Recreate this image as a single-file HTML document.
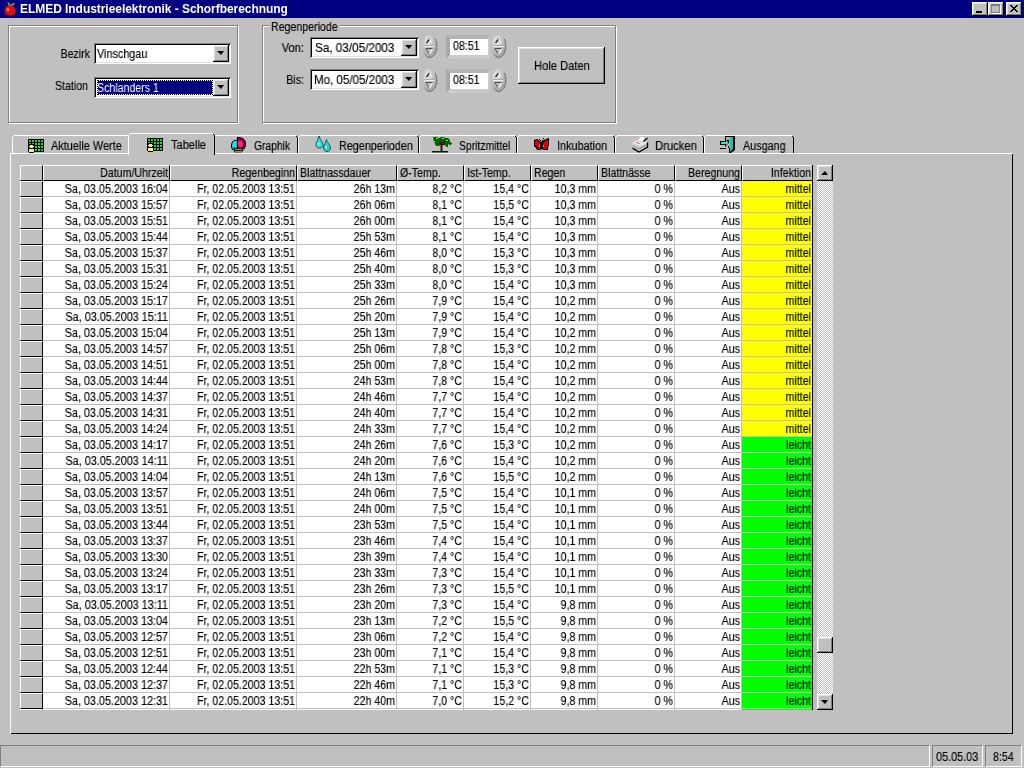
<!DOCTYPE html>
<html><head><meta charset="utf-8">
<style>
*{margin:0;padding:0;box-sizing:border-box}
html,body{width:1024px;height:768px;overflow:hidden;background:#c0c0c0}
body{position:relative;font-family:"Liberation Sans",sans-serif;font-size:12px;color:#000}
.a{position:absolute}
.t{position:absolute;will-change:transform;-webkit-text-stroke:0.15px currentColor;white-space:nowrap;line-height:13px;font-size:12px;transform:scaleX(.885);transform-origin:0 0}
.r{text-align:right;transform-origin:100% 0}
.raised{background:#c0c0c0;box-shadow:inset -1px -1px #000,inset 1px 1px #fff,inset -2px -2px #808080,inset 2px 2px #dfdfdf}
.sunk{box-shadow:inset 1px 1px #808080,inset -1px -1px #fff,inset 2px 2px #000,inset -2px -2px #dfdfdf}
.etch{border:1px solid #808080;box-shadow:1px 1px #fff, inset 1px 1px #fff}
.arrd{position:absolute;width:0;height:0;border-left:4px solid transparent;border-right:3px solid transparent;border-top:4px solid #000}
.fx{position:absolute;background:#c0c0c0;border-left:1px solid #fff;border-top:1px solid #fff;border-right:1px solid #000;border-bottom:1px solid #000}
.c{position:absolute;border-right:1px solid #c0c0c0;border-bottom:1px solid #c0c0c0}
</style></head><body>

<div class="a" style="left:0;top:0;width:1024px;height:18px;background:#000080"></div>
<svg class="a" style="left:3px;top:1px" width="16" height="16" viewBox="0 0 16 16">
<ellipse cx="7.2" cy="9.6" rx="5.6" ry="5.4" fill="#d81010"/>
<path d="M2.5 12 Q4 15.5 8 15 Q11 15 12.5 12" stroke="#700000" stroke-width="1" fill="none"/>
<ellipse cx="5" cy="8.5" rx="1.2" ry="1.8" fill="#ff7070"/>
<path d="M6.5 4.5 L5 1.5" stroke="#40c0a0" stroke-width="1.6"/>
<path d="M7.5 4.5 L11.5 2.5" stroke="#90a040" stroke-width="1.6"/>
</svg>
<div class="a" style="left:20px;top:3px;color:#fff;font-weight:bold;font-size:12px;line-height:13px;white-space:nowrap;letter-spacing:-0.05px;will-change:transform">ELMED Industrieelektronik - Schorfberechnung</div>
<div class="a raised" style="left:972px;top:2px;width:16px;height:14px"></div>
<div class="a raised" style="left:988px;top:2px;width:16px;height:14px"></div>
<div class="a raised" style="left:1006px;top:2px;width:16px;height:14px"></div>
<div class="a" style="left:976px;top:11px;width:6px;height:2px;background:#000"></div>
<div class="a" style="left:991px;top:4px;width:9px;height:9px;border:1px solid #808080;border-top-width:2px;box-shadow:1px 1px #fff"></div>
<svg class="a" style="left:1010px;top:5px" width="8" height="7" fill="#000"><rect x="0" y="0" width="1" height="1"/><rect x="1" y="0" width="1" height="1"/><rect x="6" y="0" width="1" height="1"/><rect x="7" y="0" width="1" height="1"/><rect x="1" y="1" width="1" height="1"/><rect x="2" y="1" width="1" height="1"/><rect x="5" y="1" width="1" height="1"/><rect x="6" y="1" width="1" height="1"/><rect x="2" y="2" width="1" height="1"/><rect x="3" y="2" width="1" height="1"/><rect x="4" y="2" width="1" height="1"/><rect x="5" y="2" width="1" height="1"/><rect x="3" y="3" width="1" height="1"/><rect x="4" y="3" width="1" height="1"/><rect x="3" y="3" width="1" height="1"/><rect x="4" y="3" width="1" height="1"/><rect x="4" y="4" width="1" height="1"/><rect x="5" y="4" width="1" height="1"/><rect x="2" y="4" width="1" height="1"/><rect x="3" y="4" width="1" height="1"/><rect x="5" y="5" width="1" height="1"/><rect x="6" y="5" width="1" height="1"/><rect x="1" y="5" width="1" height="1"/><rect x="2" y="5" width="1" height="1"/><rect x="6" y="6" width="1" height="1"/><rect x="7" y="6" width="1" height="1"/><rect x="0" y="6" width="1" height="1"/><rect x="1" y="6" width="1" height="1"/></svg>
<div class="a etch" style="left:8px;top:25px;width:230px;height:98px"></div>
<div class="a etch" style="left:262px;top:25px;width:354px;height:98px"></div>
<div class="a" style="left:269px;top:20px;width:71px;height:10px;background:#c0c0c0"></div>
<div class="t" style="left:271px;top:21px;">Regenperiode</div>
<div class="t r" style="left:-110px;top:48px;width:200px;">Bezirk</div>
<div class="t r" style="left:-112px;top:80px;width:200px;">Station</div>
<div class="a sunk" style="left:94px;top:43px;width:137px;height:21px;background:#fff"></div>
<div class="t" style="left:97px;top:48px;transform:scaleX(0.9);">Vinschgau</div>
<div class="a raised" style="left:213px;top:45px;width:16px;height:17px"></div>
<div class="arrd" style="left:217px;top:51px"></div>
<div class="a sunk" style="left:94px;top:77px;width:137px;height:21px;background:#fff"></div>
<div class="a" style="left:97px;top:80px;width:116px;height:15px;background:#fff;border:1px dotted #000;box-shadow:inset 0 0 0 30px #000080"></div>
<div class="t" style="left:97px;top:82px;color:#fff;-webkit-text-stroke:0">Schlanders 1</div>
<div class="a raised" style="left:213px;top:79px;width:16px;height:17px"></div>
<div class="arrd" style="left:217px;top:85px"></div>
<div class="t r" style="left:104px;top:42px;width:200px;transform:scaleX(0.93);">Von:</div>
<div class="t r" style="left:104px;top:74px;width:200px;">Bis:</div>
<div class="a sunk" style="left:310px;top:37px;width:109px;height:21px;background:#fff"></div>
<div class="t" style="left:315px;top:42px;transform:scaleX(0.975);">Sa, 03/05/2003</div>
<div class="a raised" style="left:401px;top:39px;width:16px;height:17px"></div>
<div class="arrd" style="left:405px;top:45px"></div>
<div class="a sunk" style="left:310px;top:69px;width:109px;height:21px;background:#fff"></div>
<div class="t" style="left:314px;top:74px;transform:scaleX(0.963);">Mo, 05/05/2003</div>
<div class="a raised" style="left:401px;top:71px;width:16px;height:17px"></div>
<div class="arrd" style="left:405px;top:77px"></div>
<svg class="a" style="left:421px;top:34px" width="17" height="24" viewBox="0 0 17 24">
<defs><radialGradient id="sg421_34" cx="0.38" cy="0.3" r="0.75"><stop offset="0" stop-color="#ececec"/><stop offset="0.5" stop-color="#c4c4c4"/><stop offset="1" stop-color="#9c9c9c"/></radialGradient></defs>
<ellipse cx="8.5" cy="12" rx="7.2" ry="11.2" fill="url(#sg421_34)"/>
<path d="M14.2 5 A7.2 11.2 0 0 1 4 20.7" stroke="#404040" stroke-width="1" fill="none" stroke-dasharray="1.2 0.6"/>
<path d="M3.5 12.5 H13.5" stroke="#f0f0f0" stroke-width="1"/>
<path d="M3.5 11.5 H13.5" stroke="#a8a8a8" stroke-width="1"/>
<path d="M5.5 9 L8.5 5" stroke="#202020" stroke-width="1.3" fill="none"/>
<path d="M8.5 5 L11 9" stroke="#f8f8f8" stroke-width="1" fill="none"/>
<path d="M4.5 14.5 H11.5" stroke="#505050" stroke-width="1.2" fill="none"/>
<path d="M5 15 L8.5 20" stroke="#505050" stroke-width="1" fill="none"/>
<path d="M11.5 15 L8.5 20" stroke="#ffffff" stroke-width="1.2" fill="none"/>
</svg>
<svg class="a" style="left:421px;top:68px" width="17" height="24" viewBox="0 0 17 24">
<defs><radialGradient id="sg421_68" cx="0.38" cy="0.3" r="0.75"><stop offset="0" stop-color="#ececec"/><stop offset="0.5" stop-color="#c4c4c4"/><stop offset="1" stop-color="#9c9c9c"/></radialGradient></defs>
<ellipse cx="8.5" cy="12" rx="7.2" ry="11.2" fill="url(#sg421_68)"/>
<path d="M14.2 5 A7.2 11.2 0 0 1 4 20.7" stroke="#404040" stroke-width="1" fill="none" stroke-dasharray="1.2 0.6"/>
<path d="M3.5 12.5 H13.5" stroke="#f0f0f0" stroke-width="1"/>
<path d="M3.5 11.5 H13.5" stroke="#a8a8a8" stroke-width="1"/>
<path d="M5.5 9 L8.5 5" stroke="#202020" stroke-width="1.3" fill="none"/>
<path d="M8.5 5 L11 9" stroke="#f8f8f8" stroke-width="1" fill="none"/>
<path d="M4.5 14.5 H11.5" stroke="#505050" stroke-width="1.2" fill="none"/>
<path d="M5 15 L8.5 20" stroke="#505050" stroke-width="1" fill="none"/>
<path d="M11.5 15 L8.5 20" stroke="#ffffff" stroke-width="1.2" fill="none"/>
</svg>
<svg class="a" style="left:490px;top:34px" width="17" height="24" viewBox="0 0 17 24">
<defs><radialGradient id="sg490_34" cx="0.38" cy="0.3" r="0.75"><stop offset="0" stop-color="#ececec"/><stop offset="0.5" stop-color="#c4c4c4"/><stop offset="1" stop-color="#9c9c9c"/></radialGradient></defs>
<ellipse cx="8.5" cy="12" rx="7.2" ry="11.2" fill="url(#sg490_34)"/>
<path d="M14.2 5 A7.2 11.2 0 0 1 4 20.7" stroke="#404040" stroke-width="1" fill="none" stroke-dasharray="1.2 0.6"/>
<path d="M3.5 12.5 H13.5" stroke="#f0f0f0" stroke-width="1"/>
<path d="M3.5 11.5 H13.5" stroke="#a8a8a8" stroke-width="1"/>
<path d="M5.5 9 L8.5 5" stroke="#202020" stroke-width="1.3" fill="none"/>
<path d="M8.5 5 L11 9" stroke="#f8f8f8" stroke-width="1" fill="none"/>
<path d="M4.5 14.5 H11.5" stroke="#505050" stroke-width="1.2" fill="none"/>
<path d="M5 15 L8.5 20" stroke="#505050" stroke-width="1" fill="none"/>
<path d="M11.5 15 L8.5 20" stroke="#ffffff" stroke-width="1.2" fill="none"/>
</svg>
<svg class="a" style="left:490px;top:68px" width="17" height="24" viewBox="0 0 17 24">
<defs><radialGradient id="sg490_68" cx="0.38" cy="0.3" r="0.75"><stop offset="0" stop-color="#ececec"/><stop offset="0.5" stop-color="#c4c4c4"/><stop offset="1" stop-color="#9c9c9c"/></radialGradient></defs>
<ellipse cx="8.5" cy="12" rx="7.2" ry="11.2" fill="url(#sg490_68)"/>
<path d="M14.2 5 A7.2 11.2 0 0 1 4 20.7" stroke="#404040" stroke-width="1" fill="none" stroke-dasharray="1.2 0.6"/>
<path d="M3.5 12.5 H13.5" stroke="#f0f0f0" stroke-width="1"/>
<path d="M3.5 11.5 H13.5" stroke="#a8a8a8" stroke-width="1"/>
<path d="M5.5 9 L8.5 5" stroke="#202020" stroke-width="1.3" fill="none"/>
<path d="M8.5 5 L11 9" stroke="#f8f8f8" stroke-width="1" fill="none"/>
<path d="M4.5 14.5 H11.5" stroke="#505050" stroke-width="1.2" fill="none"/>
<path d="M5 15 L8.5 20" stroke="#505050" stroke-width="1" fill="none"/>
<path d="M11.5 15 L8.5 20" stroke="#ffffff" stroke-width="1.2" fill="none"/>
</svg>
<div class="a" style="left:446px;top:35px;width:44px;height:24px;background:#fff;border-style:solid;border-width:4px 2px 4px 4px;border-color:#b4b4b4 #cccccc #cacaca #a8a8a8"></div>
<div class="t" style="left:453px;top:40px;">08:51</div>
<div class="a" style="left:446px;top:69px;width:44px;height:24px;background:#fff;border-style:solid;border-width:4px 2px 4px 4px;border-color:#b4b4b4 #cccccc #cacaca #a8a8a8"></div>
<div class="t" style="left:453px;top:74px;">08:51</div>
<div class="a raised" style="left:518px;top:47px;width:87px;height:37px"></div>
<div class="t" style="left:534px;top:60px;transform:scaleX(0.93);">Hole Daten</div>
<div class="a" style="left:10px;top:153px;width:1003px;height:581px;border-left:1px solid #fff;border-top:1px solid #fff;box-shadow:inset -1px -1px #000"></div>
<div class="a" style="left:12px;top:135px;width:118px;height:18px;background:#c0c0c0"></div>
<div class="a" style="left:12px;top:137px;width:1px;height:16px;background:#fff"></div>
<div class="a" style="left:13px;top:136px;width:1px;height:1px;background:#fff"></div>
<div class="a" style="left:14px;top:135px;width:114px;height:1px;background:#fff"></div>
<div class="a" style="left:129px;top:137px;width:1px;height:16px;background:#000"></div>
<div class="a" style="left:128px;top:136px;width:1px;height:1px;background:#000"></div>
<div class="t" style="left:51px;top:140px;transform:scaleX(0.91);">Aktuelle Werte</div>
<div class="a" style="left:213px;top:135px;width:85px;height:18px;background:#c0c0c0"></div>
<div class="a" style="left:213px;top:137px;width:1px;height:16px;background:#fff"></div>
<div class="a" style="left:214px;top:136px;width:1px;height:1px;background:#fff"></div>
<div class="a" style="left:215px;top:135px;width:81px;height:1px;background:#fff"></div>
<div class="a" style="left:297px;top:137px;width:1px;height:16px;background:#000"></div>
<div class="a" style="left:296px;top:136px;width:1px;height:1px;background:#000"></div>
<div class="t" style="left:254px;top:140px;transform:scaleX(0.86);">Graphik</div>
<div class="a" style="left:298px;top:135px;width:121px;height:18px;background:#c0c0c0"></div>
<div class="a" style="left:298px;top:137px;width:1px;height:16px;background:#fff"></div>
<div class="a" style="left:299px;top:136px;width:1px;height:1px;background:#fff"></div>
<div class="a" style="left:300px;top:135px;width:117px;height:1px;background:#fff"></div>
<div class="a" style="left:418px;top:137px;width:1px;height:16px;background:#000"></div>
<div class="a" style="left:417px;top:136px;width:1px;height:1px;background:#000"></div>
<div class="t" style="left:339px;top:140px;transform:scaleX(0.9);">Regenperioden</div>
<div class="a" style="left:419px;top:135px;width:98px;height:18px;background:#c0c0c0"></div>
<div class="a" style="left:419px;top:137px;width:1px;height:16px;background:#fff"></div>
<div class="a" style="left:420px;top:136px;width:1px;height:1px;background:#fff"></div>
<div class="a" style="left:421px;top:135px;width:94px;height:1px;background:#fff"></div>
<div class="a" style="left:516px;top:137px;width:1px;height:16px;background:#000"></div>
<div class="a" style="left:515px;top:136px;width:1px;height:1px;background:#000"></div>
<div class="t" style="left:459px;top:140px;transform:scaleX(0.865);">Spritzmittel</div>
<div class="a" style="left:517px;top:135px;width:98px;height:18px;background:#c0c0c0"></div>
<div class="a" style="left:517px;top:137px;width:1px;height:16px;background:#fff"></div>
<div class="a" style="left:518px;top:136px;width:1px;height:1px;background:#fff"></div>
<div class="a" style="left:519px;top:135px;width:94px;height:1px;background:#fff"></div>
<div class="a" style="left:614px;top:137px;width:1px;height:16px;background:#000"></div>
<div class="a" style="left:613px;top:136px;width:1px;height:1px;background:#000"></div>
<div class="t" style="left:557px;top:140px;transform:scaleX(0.905);">Inkubation</div>
<div class="a" style="left:615px;top:135px;width:89px;height:18px;background:#c0c0c0"></div>
<div class="a" style="left:615px;top:137px;width:1px;height:16px;background:#fff"></div>
<div class="a" style="left:616px;top:136px;width:1px;height:1px;background:#fff"></div>
<div class="a" style="left:617px;top:135px;width:85px;height:1px;background:#fff"></div>
<div class="a" style="left:703px;top:137px;width:1px;height:16px;background:#000"></div>
<div class="a" style="left:702px;top:136px;width:1px;height:1px;background:#000"></div>
<div class="t" style="left:655px;top:140px;transform:scaleX(0.94);">Drucken</div>
<div class="a" style="left:704px;top:135px;width:90px;height:18px;background:#c0c0c0"></div>
<div class="a" style="left:704px;top:137px;width:1px;height:16px;background:#fff"></div>
<div class="a" style="left:705px;top:136px;width:1px;height:1px;background:#fff"></div>
<div class="a" style="left:706px;top:135px;width:86px;height:1px;background:#fff"></div>
<div class="a" style="left:793px;top:137px;width:1px;height:16px;background:#000"></div>
<div class="a" style="left:792px;top:136px;width:1px;height:1px;background:#000"></div>
<div class="t" style="left:743px;top:140px;transform:scaleX(0.9);">Ausgang</div>
<div class="a" style="left:128px;top:133px;width:87px;height:22px;background:#c0c0c0"></div>
<div class="a" style="left:128px;top:135px;width:1px;height:20px;background:#fff"></div>
<div class="a" style="left:129px;top:134px;width:1px;height:1px;background:#fff"></div>
<div class="a" style="left:130px;top:133px;width:83px;height:1px;background:#fff"></div>
<div class="a" style="left:214px;top:135px;width:1px;height:20px;background:#000"></div>
<div class="a" style="left:213px;top:134px;width:1px;height:1px;background:#000"></div>
<div class="t" style="left:171px;top:139px;transform:scaleX(0.92);">Tabelle</div>
<div class="a" style="left:128px;top:153px;width:1px;height:2px;background:#fff"></div>
<svg class="a" style="left:28px;top:139px" width="16" height="16" viewBox="0 0 16 16"><rect x="0" y="0" width="16" height="13" fill="#000"/><rect x="1" y="1" width="2" height="2" fill="#20d040"/><rect x="1" y="4" width="2" height="2" fill="#20d040"/><rect x="1" y="7" width="2" height="2" fill="#20d040"/><rect x="1" y="10" width="2" height="2" fill="#20d040"/><rect x="4" y="1" width="2" height="2" fill="#20d040"/><rect x="4" y="4" width="2" height="2" fill="#20d040"/><rect x="4" y="7" width="2" height="2" fill="#20d040"/><rect x="4" y="10" width="2" height="2" fill="#20d040"/><rect x="7" y="1" width="2" height="2" fill="#20d040"/><rect x="7" y="4" width="2" height="2" fill="#20d040"/><rect x="7" y="7" width="2" height="2" fill="#20d040"/><rect x="7" y="10" width="2" height="2" fill="#20d040"/><rect x="10" y="1" width="2" height="2" fill="#20d040"/><rect x="10" y="4" width="2" height="2" fill="#20d040"/><rect x="10" y="7" width="2" height="2" fill="#20d040"/><rect x="10" y="10" width="2" height="2" fill="#20d040"/><rect x="13" y="1" width="2" height="2" fill="#20d040"/><rect x="13" y="4" width="2" height="2" fill="#20d040"/><rect x="13" y="7" width="2" height="2" fill="#20d040"/><rect x="13" y="10" width="2" height="2" fill="#20d040"/><rect x="1" y="5" width="5" height="9" fill="#000"/><rect x="2" y="6" width="3" height="3" fill="#f0f090"/><rect x="1" y="7" width="5" height="1" fill="#f0f090"/><rect x="1" y="10" width="5" height="3" fill="#f0f080"/><rect x="2" y="13" width="3" height="1" fill="#000"/></svg>
<svg class="a" style="left:147px;top:138px" width="16" height="16" viewBox="0 0 16 16"><rect x="0" y="0" width="16" height="13" fill="#000"/><rect x="1" y="1" width="2" height="2" fill="#20d040"/><rect x="1" y="4" width="2" height="2" fill="#20d040"/><rect x="1" y="7" width="2" height="2" fill="#20d040"/><rect x="1" y="10" width="2" height="2" fill="#20d040"/><rect x="4" y="1" width="2" height="2" fill="#20d040"/><rect x="4" y="4" width="2" height="2" fill="#20d040"/><rect x="4" y="7" width="2" height="2" fill="#20d040"/><rect x="4" y="10" width="2" height="2" fill="#20d040"/><rect x="7" y="1" width="2" height="2" fill="#20d040"/><rect x="7" y="4" width="2" height="2" fill="#20d040"/><rect x="7" y="7" width="2" height="2" fill="#20d040"/><rect x="7" y="10" width="2" height="2" fill="#20d040"/><rect x="10" y="1" width="2" height="2" fill="#20d040"/><rect x="10" y="4" width="2" height="2" fill="#20d040"/><rect x="10" y="7" width="2" height="2" fill="#20d040"/><rect x="10" y="10" width="2" height="2" fill="#20d040"/><rect x="13" y="1" width="2" height="2" fill="#20d040"/><rect x="13" y="4" width="2" height="2" fill="#20d040"/><rect x="13" y="7" width="2" height="2" fill="#20d040"/><rect x="13" y="10" width="2" height="2" fill="#20d040"/><rect x="1" y="5" width="5" height="9" fill="#000"/><rect x="2" y="6" width="3" height="3" fill="#f0f090"/><rect x="1" y="7" width="5" height="1" fill="#f0f090"/><rect x="1" y="10" width="5" height="3" fill="#f0f080"/><rect x="2" y="13" width="3" height="1" fill="#000"/></svg>
<svg class="a" style="left:230px;top:136px" width="17" height="17" viewBox="0 0 17 17">
<path d="M7.5 4 C4 4 1.5 6 1.5 9.5 C1.5 12 3 14 5 14.5 L7.5 14.5 Z" fill="#20e0e0" stroke="#000" stroke-width="1.1"/>
<path d="M2.5 11 C3 13 4 14 6 14 L7 14 V11 Z" fill="#10a0a0"/>
<path d="M7.5 1.5 C12 1 15.5 3.5 15.5 8 C15.5 11 14 13 12 13.5 H7.5 Z" fill="#900040" stroke="#000" stroke-width="1.1"/>
<ellipse cx="10.2" cy="7.8" rx="2.6" ry="3.4" fill="#ff2080"/>
<path d="M4.5 12.5 H13.5 L12 14 H4 Z" fill="#f0f070" stroke="#000" stroke-width="0.8"/>
<path d="M4.5 14.5 H13 L11.5 16 H4.5 Z" fill="#f0f070" stroke="#000" stroke-width="0.8"/>
</svg>
<svg class="a" style="left:315px;top:136px" width="17" height="16" viewBox="0 0 17 16">
<path d="M4 0 C4.5 3 8 6 8 9 C8 11 6.5 12 4.5 12 C2.5 12 1 11 1 9 C1 6 3.5 3 4 0z" fill="#40d8d8" stroke="#006868" stroke-width="1"/>
<path d="M11.5 3.5 C12 6.5 15.5 9 15.5 12 C15.5 14 14 15.5 12 15.5 C10 15.5 8.5 14 8.5 12 C8.5 9 11 6.5 11.5 3.5z" fill="#30c8c8" stroke="#006868" stroke-width="1"/>
<ellipse cx="3.5" cy="8" rx="1" ry="1.5" fill="#a0ffff"/><ellipse cx="11" cy="11" rx="1" ry="1.5" fill="#a0ffff"/>
</svg>
<svg class="a" style="left:432px;top:136px" width="20" height="17" viewBox="0 0 20 17">
<path d="M1 1 h4 l1 1 h2 l1 -1 h3 l1 1 h3 l2 2 v2 l2 1 v1 l-2 1 h-2 v2 h-2 v-1 l-2 -1 h-3 l-2 1 h-2 l-2 -1 v-2 l-1 -1z" fill="#006400"/>
<path d="M4 2 h2 v1 h-2z M10 2 h2 v1 h-2z M14 4 h2 v1 h-2z M7 6 h2 v1 h-2z M2 5 h1 v1 h-1z M16 8 h1 v1 h-1z" fill="#70f070"/>
<path d="M3 4 h1 v1 h-1z M8 3 h1 v1 h-1z M12 5 h1 v1 h-1z M5 7 h1 v1 h-1z M15 6 h1 v1 h-1z M11 8 h1 v1 h-1z" fill="#000"/>
<path d="M7 6 l1.5 3 v6.5 h2 v-6 l2.5 -3 l-1 -0.5 l-2 2 l-1.5 -2.5z" fill="#500010"/>
<path d="M0 15 h16 v1.5 h-16z" fill="#002800"/>
</svg>
<svg class="a" style="left:533px;top:138px" width="17" height="13" viewBox="0 0 17 13">
<path d="M1 2 l3 -1 l4 3 l1 -1 l4 -2 l3 -1 v8 l-1 1 v3 h-4 l-2 -1 l-2 1 h-3 l-1 -2 l-2 -2z" fill="#000"/>
<path d="M2 3 l2 -1 l3 3 v6 h-2 l-1 -2 l-2 -2z" fill="#e00000"/>
<path d="M10 5 l4 -3 h1 v6 l-1 1 v2 h-3 l-1 -1z" fill="#e00000"/>
<path d="M6 6 l1 1 v2 h-1z M10 7 h1 v2 h-1z" fill="#ff8020"/>
<rect x="6" y="1" width="1" height="1" fill="#000"/><rect x="7" y="2" width="1" height="1" fill="#000"/><rect x="10" y="0" width="1" height="1" fill="#000"/><rect x="9" y="2" width="1" height="1" fill="#000"/>
</svg>
<svg class="a" style="left:631px;top:136px" width="18" height="17" viewBox="0 0 18 17">
<path d="M1 7 L6 4 H12 L16.5 6.5 V11 L8 16 L1 12 Z" fill="#c8c8c8"/>
<path d="M1 7 L6 4 H12 L16.5 6.5 L9 10 Z" fill="#e8e8e8"/>
<path d="M6.5 5 L9 0.5 H12.5 L14 2 L12 6 Z" fill="#ffffff" stroke="#b0b0b0" stroke-width="0.6"/>
<path d="M16.5 6.5 V11 L8 16 L1.5 12.2" stroke="#000" stroke-width="1.4" fill="none"/>
<path d="M16.5 2 L12.5 5.5" stroke="#000" stroke-width="1.3"/>
<path d="M2 10 L8 13 L15.5 9" stroke="#909090" stroke-width="1" fill="none"/>
<rect x="5" y="6" width="1.5" height="1" fill="#b06040"/><rect x="7" y="7" width="1.5" height="1" fill="#b06040"/>
</svg>
<svg class="a" style="left:720px;top:136px" width="15" height="17" viewBox="0 0 15 17">
<path d="M5 0 h10 v14 l-4 3 h-2 v-5 h-1 v-2 h1 v-3 h-1 v-2 h-1 v-1 h-2z" fill="#000"/>
<path d="M6 1 h7 l-3 2 v9 h-1 v-8 h-3z" fill="#a0b0b0"/>
<path d="M10 3 l3 -2 v12 l-3 3z" fill="#20c0b0"/>
<path d="M0 5 h5 v-2 l4 4 l-4 4 v-2 h-5z" fill="#000"/>
<path d="M1 6 h5 v-1.5 l2.5 2.5 l-2.5 2.5 v-1.5 h-5z" fill="#40e0c0"/>
<path d="M0 12 h6 v1 h-6z" fill="#000"/>
</svg>
<div class="a" style="left:20px;top:165px;width:793px;height:545px;background:#fff;overflow:hidden">
<div class="fx" style="left:0px;top:0px;width:23px;height:16px"></div>
<div class="fx" style="left:23px;top:0px;width:127px;height:16px"></div>
<div class="fx" style="left:150px;top:0px;width:127px;height:16px"></div>
<div class="fx" style="left:277px;top:0px;width:100px;height:16px"></div>
<div class="fx" style="left:377px;top:0px;width:67px;height:16px"></div>
<div class="fx" style="left:444px;top:0px;width:67px;height:16px"></div>
<div class="fx" style="left:511px;top:0px;width:67px;height:16px"></div>
<div class="fx" style="left:578px;top:0px;width:77px;height:16px"></div>
<div class="fx" style="left:655px;top:0px;width:67px;height:16px"></div>
<div class="fx" style="left:722px;top:0px;width:71px;height:16px"></div>
<div class="fx" style="left:0px;top:16px;width:23px;height:16px"></div>
<div class="c" style="left:23px;top:16px;width:127px;height:16px"></div>
<div class="c" style="left:150px;top:16px;width:127px;height:16px"></div>
<div class="c" style="left:277px;top:16px;width:100px;height:16px"></div>
<div class="c" style="left:377px;top:16px;width:67px;height:16px"></div>
<div class="c" style="left:444px;top:16px;width:67px;height:16px"></div>
<div class="c" style="left:511px;top:16px;width:67px;height:16px"></div>
<div class="c" style="left:578px;top:16px;width:77px;height:16px"></div>
<div class="c" style="left:655px;top:16px;width:67px;height:16px"></div>
<div class="c" style="left:722px;top:16px;width:71px;height:16px;background:#ffff00"></div>
<div class="fx" style="left:0px;top:32px;width:23px;height:16px"></div>
<div class="c" style="left:23px;top:32px;width:127px;height:16px"></div>
<div class="c" style="left:150px;top:32px;width:127px;height:16px"></div>
<div class="c" style="left:277px;top:32px;width:100px;height:16px"></div>
<div class="c" style="left:377px;top:32px;width:67px;height:16px"></div>
<div class="c" style="left:444px;top:32px;width:67px;height:16px"></div>
<div class="c" style="left:511px;top:32px;width:67px;height:16px"></div>
<div class="c" style="left:578px;top:32px;width:77px;height:16px"></div>
<div class="c" style="left:655px;top:32px;width:67px;height:16px"></div>
<div class="c" style="left:722px;top:32px;width:71px;height:16px;background:#ffff00"></div>
<div class="fx" style="left:0px;top:48px;width:23px;height:16px"></div>
<div class="c" style="left:23px;top:48px;width:127px;height:16px"></div>
<div class="c" style="left:150px;top:48px;width:127px;height:16px"></div>
<div class="c" style="left:277px;top:48px;width:100px;height:16px"></div>
<div class="c" style="left:377px;top:48px;width:67px;height:16px"></div>
<div class="c" style="left:444px;top:48px;width:67px;height:16px"></div>
<div class="c" style="left:511px;top:48px;width:67px;height:16px"></div>
<div class="c" style="left:578px;top:48px;width:77px;height:16px"></div>
<div class="c" style="left:655px;top:48px;width:67px;height:16px"></div>
<div class="c" style="left:722px;top:48px;width:71px;height:16px;background:#ffff00"></div>
<div class="fx" style="left:0px;top:64px;width:23px;height:16px"></div>
<div class="c" style="left:23px;top:64px;width:127px;height:16px"></div>
<div class="c" style="left:150px;top:64px;width:127px;height:16px"></div>
<div class="c" style="left:277px;top:64px;width:100px;height:16px"></div>
<div class="c" style="left:377px;top:64px;width:67px;height:16px"></div>
<div class="c" style="left:444px;top:64px;width:67px;height:16px"></div>
<div class="c" style="left:511px;top:64px;width:67px;height:16px"></div>
<div class="c" style="left:578px;top:64px;width:77px;height:16px"></div>
<div class="c" style="left:655px;top:64px;width:67px;height:16px"></div>
<div class="c" style="left:722px;top:64px;width:71px;height:16px;background:#ffff00"></div>
<div class="fx" style="left:0px;top:80px;width:23px;height:16px"></div>
<div class="c" style="left:23px;top:80px;width:127px;height:16px"></div>
<div class="c" style="left:150px;top:80px;width:127px;height:16px"></div>
<div class="c" style="left:277px;top:80px;width:100px;height:16px"></div>
<div class="c" style="left:377px;top:80px;width:67px;height:16px"></div>
<div class="c" style="left:444px;top:80px;width:67px;height:16px"></div>
<div class="c" style="left:511px;top:80px;width:67px;height:16px"></div>
<div class="c" style="left:578px;top:80px;width:77px;height:16px"></div>
<div class="c" style="left:655px;top:80px;width:67px;height:16px"></div>
<div class="c" style="left:722px;top:80px;width:71px;height:16px;background:#ffff00"></div>
<div class="fx" style="left:0px;top:96px;width:23px;height:16px"></div>
<div class="c" style="left:23px;top:96px;width:127px;height:16px"></div>
<div class="c" style="left:150px;top:96px;width:127px;height:16px"></div>
<div class="c" style="left:277px;top:96px;width:100px;height:16px"></div>
<div class="c" style="left:377px;top:96px;width:67px;height:16px"></div>
<div class="c" style="left:444px;top:96px;width:67px;height:16px"></div>
<div class="c" style="left:511px;top:96px;width:67px;height:16px"></div>
<div class="c" style="left:578px;top:96px;width:77px;height:16px"></div>
<div class="c" style="left:655px;top:96px;width:67px;height:16px"></div>
<div class="c" style="left:722px;top:96px;width:71px;height:16px;background:#ffff00"></div>
<div class="fx" style="left:0px;top:112px;width:23px;height:16px"></div>
<div class="c" style="left:23px;top:112px;width:127px;height:16px"></div>
<div class="c" style="left:150px;top:112px;width:127px;height:16px"></div>
<div class="c" style="left:277px;top:112px;width:100px;height:16px"></div>
<div class="c" style="left:377px;top:112px;width:67px;height:16px"></div>
<div class="c" style="left:444px;top:112px;width:67px;height:16px"></div>
<div class="c" style="left:511px;top:112px;width:67px;height:16px"></div>
<div class="c" style="left:578px;top:112px;width:77px;height:16px"></div>
<div class="c" style="left:655px;top:112px;width:67px;height:16px"></div>
<div class="c" style="left:722px;top:112px;width:71px;height:16px;background:#ffff00"></div>
<div class="fx" style="left:0px;top:128px;width:23px;height:16px"></div>
<div class="c" style="left:23px;top:128px;width:127px;height:16px"></div>
<div class="c" style="left:150px;top:128px;width:127px;height:16px"></div>
<div class="c" style="left:277px;top:128px;width:100px;height:16px"></div>
<div class="c" style="left:377px;top:128px;width:67px;height:16px"></div>
<div class="c" style="left:444px;top:128px;width:67px;height:16px"></div>
<div class="c" style="left:511px;top:128px;width:67px;height:16px"></div>
<div class="c" style="left:578px;top:128px;width:77px;height:16px"></div>
<div class="c" style="left:655px;top:128px;width:67px;height:16px"></div>
<div class="c" style="left:722px;top:128px;width:71px;height:16px;background:#ffff00"></div>
<div class="fx" style="left:0px;top:144px;width:23px;height:16px"></div>
<div class="c" style="left:23px;top:144px;width:127px;height:16px"></div>
<div class="c" style="left:150px;top:144px;width:127px;height:16px"></div>
<div class="c" style="left:277px;top:144px;width:100px;height:16px"></div>
<div class="c" style="left:377px;top:144px;width:67px;height:16px"></div>
<div class="c" style="left:444px;top:144px;width:67px;height:16px"></div>
<div class="c" style="left:511px;top:144px;width:67px;height:16px"></div>
<div class="c" style="left:578px;top:144px;width:77px;height:16px"></div>
<div class="c" style="left:655px;top:144px;width:67px;height:16px"></div>
<div class="c" style="left:722px;top:144px;width:71px;height:16px;background:#ffff00"></div>
<div class="fx" style="left:0px;top:160px;width:23px;height:16px"></div>
<div class="c" style="left:23px;top:160px;width:127px;height:16px"></div>
<div class="c" style="left:150px;top:160px;width:127px;height:16px"></div>
<div class="c" style="left:277px;top:160px;width:100px;height:16px"></div>
<div class="c" style="left:377px;top:160px;width:67px;height:16px"></div>
<div class="c" style="left:444px;top:160px;width:67px;height:16px"></div>
<div class="c" style="left:511px;top:160px;width:67px;height:16px"></div>
<div class="c" style="left:578px;top:160px;width:77px;height:16px"></div>
<div class="c" style="left:655px;top:160px;width:67px;height:16px"></div>
<div class="c" style="left:722px;top:160px;width:71px;height:16px;background:#ffff00"></div>
<div class="fx" style="left:0px;top:176px;width:23px;height:16px"></div>
<div class="c" style="left:23px;top:176px;width:127px;height:16px"></div>
<div class="c" style="left:150px;top:176px;width:127px;height:16px"></div>
<div class="c" style="left:277px;top:176px;width:100px;height:16px"></div>
<div class="c" style="left:377px;top:176px;width:67px;height:16px"></div>
<div class="c" style="left:444px;top:176px;width:67px;height:16px"></div>
<div class="c" style="left:511px;top:176px;width:67px;height:16px"></div>
<div class="c" style="left:578px;top:176px;width:77px;height:16px"></div>
<div class="c" style="left:655px;top:176px;width:67px;height:16px"></div>
<div class="c" style="left:722px;top:176px;width:71px;height:16px;background:#ffff00"></div>
<div class="fx" style="left:0px;top:192px;width:23px;height:16px"></div>
<div class="c" style="left:23px;top:192px;width:127px;height:16px"></div>
<div class="c" style="left:150px;top:192px;width:127px;height:16px"></div>
<div class="c" style="left:277px;top:192px;width:100px;height:16px"></div>
<div class="c" style="left:377px;top:192px;width:67px;height:16px"></div>
<div class="c" style="left:444px;top:192px;width:67px;height:16px"></div>
<div class="c" style="left:511px;top:192px;width:67px;height:16px"></div>
<div class="c" style="left:578px;top:192px;width:77px;height:16px"></div>
<div class="c" style="left:655px;top:192px;width:67px;height:16px"></div>
<div class="c" style="left:722px;top:192px;width:71px;height:16px;background:#ffff00"></div>
<div class="fx" style="left:0px;top:208px;width:23px;height:16px"></div>
<div class="c" style="left:23px;top:208px;width:127px;height:16px"></div>
<div class="c" style="left:150px;top:208px;width:127px;height:16px"></div>
<div class="c" style="left:277px;top:208px;width:100px;height:16px"></div>
<div class="c" style="left:377px;top:208px;width:67px;height:16px"></div>
<div class="c" style="left:444px;top:208px;width:67px;height:16px"></div>
<div class="c" style="left:511px;top:208px;width:67px;height:16px"></div>
<div class="c" style="left:578px;top:208px;width:77px;height:16px"></div>
<div class="c" style="left:655px;top:208px;width:67px;height:16px"></div>
<div class="c" style="left:722px;top:208px;width:71px;height:16px;background:#ffff00"></div>
<div class="fx" style="left:0px;top:224px;width:23px;height:16px"></div>
<div class="c" style="left:23px;top:224px;width:127px;height:16px"></div>
<div class="c" style="left:150px;top:224px;width:127px;height:16px"></div>
<div class="c" style="left:277px;top:224px;width:100px;height:16px"></div>
<div class="c" style="left:377px;top:224px;width:67px;height:16px"></div>
<div class="c" style="left:444px;top:224px;width:67px;height:16px"></div>
<div class="c" style="left:511px;top:224px;width:67px;height:16px"></div>
<div class="c" style="left:578px;top:224px;width:77px;height:16px"></div>
<div class="c" style="left:655px;top:224px;width:67px;height:16px"></div>
<div class="c" style="left:722px;top:224px;width:71px;height:16px;background:#ffff00"></div>
<div class="fx" style="left:0px;top:240px;width:23px;height:16px"></div>
<div class="c" style="left:23px;top:240px;width:127px;height:16px"></div>
<div class="c" style="left:150px;top:240px;width:127px;height:16px"></div>
<div class="c" style="left:277px;top:240px;width:100px;height:16px"></div>
<div class="c" style="left:377px;top:240px;width:67px;height:16px"></div>
<div class="c" style="left:444px;top:240px;width:67px;height:16px"></div>
<div class="c" style="left:511px;top:240px;width:67px;height:16px"></div>
<div class="c" style="left:578px;top:240px;width:77px;height:16px"></div>
<div class="c" style="left:655px;top:240px;width:67px;height:16px"></div>
<div class="c" style="left:722px;top:240px;width:71px;height:16px;background:#ffff00"></div>
<div class="fx" style="left:0px;top:256px;width:23px;height:16px"></div>
<div class="c" style="left:23px;top:256px;width:127px;height:16px"></div>
<div class="c" style="left:150px;top:256px;width:127px;height:16px"></div>
<div class="c" style="left:277px;top:256px;width:100px;height:16px"></div>
<div class="c" style="left:377px;top:256px;width:67px;height:16px"></div>
<div class="c" style="left:444px;top:256px;width:67px;height:16px"></div>
<div class="c" style="left:511px;top:256px;width:67px;height:16px"></div>
<div class="c" style="left:578px;top:256px;width:77px;height:16px"></div>
<div class="c" style="left:655px;top:256px;width:67px;height:16px"></div>
<div class="c" style="left:722px;top:256px;width:71px;height:16px;background:#ffff00"></div>
<div class="fx" style="left:0px;top:272px;width:23px;height:16px"></div>
<div class="c" style="left:23px;top:272px;width:127px;height:16px"></div>
<div class="c" style="left:150px;top:272px;width:127px;height:16px"></div>
<div class="c" style="left:277px;top:272px;width:100px;height:16px"></div>
<div class="c" style="left:377px;top:272px;width:67px;height:16px"></div>
<div class="c" style="left:444px;top:272px;width:67px;height:16px"></div>
<div class="c" style="left:511px;top:272px;width:67px;height:16px"></div>
<div class="c" style="left:578px;top:272px;width:77px;height:16px"></div>
<div class="c" style="left:655px;top:272px;width:67px;height:16px"></div>
<div class="c" style="left:722px;top:272px;width:71px;height:16px;background:#00ff00"></div>
<div class="fx" style="left:0px;top:288px;width:23px;height:16px"></div>
<div class="c" style="left:23px;top:288px;width:127px;height:16px"></div>
<div class="c" style="left:150px;top:288px;width:127px;height:16px"></div>
<div class="c" style="left:277px;top:288px;width:100px;height:16px"></div>
<div class="c" style="left:377px;top:288px;width:67px;height:16px"></div>
<div class="c" style="left:444px;top:288px;width:67px;height:16px"></div>
<div class="c" style="left:511px;top:288px;width:67px;height:16px"></div>
<div class="c" style="left:578px;top:288px;width:77px;height:16px"></div>
<div class="c" style="left:655px;top:288px;width:67px;height:16px"></div>
<div class="c" style="left:722px;top:288px;width:71px;height:16px;background:#00ff00"></div>
<div class="fx" style="left:0px;top:304px;width:23px;height:16px"></div>
<div class="c" style="left:23px;top:304px;width:127px;height:16px"></div>
<div class="c" style="left:150px;top:304px;width:127px;height:16px"></div>
<div class="c" style="left:277px;top:304px;width:100px;height:16px"></div>
<div class="c" style="left:377px;top:304px;width:67px;height:16px"></div>
<div class="c" style="left:444px;top:304px;width:67px;height:16px"></div>
<div class="c" style="left:511px;top:304px;width:67px;height:16px"></div>
<div class="c" style="left:578px;top:304px;width:77px;height:16px"></div>
<div class="c" style="left:655px;top:304px;width:67px;height:16px"></div>
<div class="c" style="left:722px;top:304px;width:71px;height:16px;background:#00ff00"></div>
<div class="fx" style="left:0px;top:320px;width:23px;height:16px"></div>
<div class="c" style="left:23px;top:320px;width:127px;height:16px"></div>
<div class="c" style="left:150px;top:320px;width:127px;height:16px"></div>
<div class="c" style="left:277px;top:320px;width:100px;height:16px"></div>
<div class="c" style="left:377px;top:320px;width:67px;height:16px"></div>
<div class="c" style="left:444px;top:320px;width:67px;height:16px"></div>
<div class="c" style="left:511px;top:320px;width:67px;height:16px"></div>
<div class="c" style="left:578px;top:320px;width:77px;height:16px"></div>
<div class="c" style="left:655px;top:320px;width:67px;height:16px"></div>
<div class="c" style="left:722px;top:320px;width:71px;height:16px;background:#00ff00"></div>
<div class="fx" style="left:0px;top:336px;width:23px;height:16px"></div>
<div class="c" style="left:23px;top:336px;width:127px;height:16px"></div>
<div class="c" style="left:150px;top:336px;width:127px;height:16px"></div>
<div class="c" style="left:277px;top:336px;width:100px;height:16px"></div>
<div class="c" style="left:377px;top:336px;width:67px;height:16px"></div>
<div class="c" style="left:444px;top:336px;width:67px;height:16px"></div>
<div class="c" style="left:511px;top:336px;width:67px;height:16px"></div>
<div class="c" style="left:578px;top:336px;width:77px;height:16px"></div>
<div class="c" style="left:655px;top:336px;width:67px;height:16px"></div>
<div class="c" style="left:722px;top:336px;width:71px;height:16px;background:#00ff00"></div>
<div class="fx" style="left:0px;top:352px;width:23px;height:16px"></div>
<div class="c" style="left:23px;top:352px;width:127px;height:16px"></div>
<div class="c" style="left:150px;top:352px;width:127px;height:16px"></div>
<div class="c" style="left:277px;top:352px;width:100px;height:16px"></div>
<div class="c" style="left:377px;top:352px;width:67px;height:16px"></div>
<div class="c" style="left:444px;top:352px;width:67px;height:16px"></div>
<div class="c" style="left:511px;top:352px;width:67px;height:16px"></div>
<div class="c" style="left:578px;top:352px;width:77px;height:16px"></div>
<div class="c" style="left:655px;top:352px;width:67px;height:16px"></div>
<div class="c" style="left:722px;top:352px;width:71px;height:16px;background:#00ff00"></div>
<div class="fx" style="left:0px;top:368px;width:23px;height:16px"></div>
<div class="c" style="left:23px;top:368px;width:127px;height:16px"></div>
<div class="c" style="left:150px;top:368px;width:127px;height:16px"></div>
<div class="c" style="left:277px;top:368px;width:100px;height:16px"></div>
<div class="c" style="left:377px;top:368px;width:67px;height:16px"></div>
<div class="c" style="left:444px;top:368px;width:67px;height:16px"></div>
<div class="c" style="left:511px;top:368px;width:67px;height:16px"></div>
<div class="c" style="left:578px;top:368px;width:77px;height:16px"></div>
<div class="c" style="left:655px;top:368px;width:67px;height:16px"></div>
<div class="c" style="left:722px;top:368px;width:71px;height:16px;background:#00ff00"></div>
<div class="fx" style="left:0px;top:384px;width:23px;height:16px"></div>
<div class="c" style="left:23px;top:384px;width:127px;height:16px"></div>
<div class="c" style="left:150px;top:384px;width:127px;height:16px"></div>
<div class="c" style="left:277px;top:384px;width:100px;height:16px"></div>
<div class="c" style="left:377px;top:384px;width:67px;height:16px"></div>
<div class="c" style="left:444px;top:384px;width:67px;height:16px"></div>
<div class="c" style="left:511px;top:384px;width:67px;height:16px"></div>
<div class="c" style="left:578px;top:384px;width:77px;height:16px"></div>
<div class="c" style="left:655px;top:384px;width:67px;height:16px"></div>
<div class="c" style="left:722px;top:384px;width:71px;height:16px;background:#00ff00"></div>
<div class="fx" style="left:0px;top:400px;width:23px;height:16px"></div>
<div class="c" style="left:23px;top:400px;width:127px;height:16px"></div>
<div class="c" style="left:150px;top:400px;width:127px;height:16px"></div>
<div class="c" style="left:277px;top:400px;width:100px;height:16px"></div>
<div class="c" style="left:377px;top:400px;width:67px;height:16px"></div>
<div class="c" style="left:444px;top:400px;width:67px;height:16px"></div>
<div class="c" style="left:511px;top:400px;width:67px;height:16px"></div>
<div class="c" style="left:578px;top:400px;width:77px;height:16px"></div>
<div class="c" style="left:655px;top:400px;width:67px;height:16px"></div>
<div class="c" style="left:722px;top:400px;width:71px;height:16px;background:#00ff00"></div>
<div class="fx" style="left:0px;top:416px;width:23px;height:16px"></div>
<div class="c" style="left:23px;top:416px;width:127px;height:16px"></div>
<div class="c" style="left:150px;top:416px;width:127px;height:16px"></div>
<div class="c" style="left:277px;top:416px;width:100px;height:16px"></div>
<div class="c" style="left:377px;top:416px;width:67px;height:16px"></div>
<div class="c" style="left:444px;top:416px;width:67px;height:16px"></div>
<div class="c" style="left:511px;top:416px;width:67px;height:16px"></div>
<div class="c" style="left:578px;top:416px;width:77px;height:16px"></div>
<div class="c" style="left:655px;top:416px;width:67px;height:16px"></div>
<div class="c" style="left:722px;top:416px;width:71px;height:16px;background:#00ff00"></div>
<div class="fx" style="left:0px;top:432px;width:23px;height:16px"></div>
<div class="c" style="left:23px;top:432px;width:127px;height:16px"></div>
<div class="c" style="left:150px;top:432px;width:127px;height:16px"></div>
<div class="c" style="left:277px;top:432px;width:100px;height:16px"></div>
<div class="c" style="left:377px;top:432px;width:67px;height:16px"></div>
<div class="c" style="left:444px;top:432px;width:67px;height:16px"></div>
<div class="c" style="left:511px;top:432px;width:67px;height:16px"></div>
<div class="c" style="left:578px;top:432px;width:77px;height:16px"></div>
<div class="c" style="left:655px;top:432px;width:67px;height:16px"></div>
<div class="c" style="left:722px;top:432px;width:71px;height:16px;background:#00ff00"></div>
<div class="fx" style="left:0px;top:448px;width:23px;height:16px"></div>
<div class="c" style="left:23px;top:448px;width:127px;height:16px"></div>
<div class="c" style="left:150px;top:448px;width:127px;height:16px"></div>
<div class="c" style="left:277px;top:448px;width:100px;height:16px"></div>
<div class="c" style="left:377px;top:448px;width:67px;height:16px"></div>
<div class="c" style="left:444px;top:448px;width:67px;height:16px"></div>
<div class="c" style="left:511px;top:448px;width:67px;height:16px"></div>
<div class="c" style="left:578px;top:448px;width:77px;height:16px"></div>
<div class="c" style="left:655px;top:448px;width:67px;height:16px"></div>
<div class="c" style="left:722px;top:448px;width:71px;height:16px;background:#00ff00"></div>
<div class="fx" style="left:0px;top:464px;width:23px;height:16px"></div>
<div class="c" style="left:23px;top:464px;width:127px;height:16px"></div>
<div class="c" style="left:150px;top:464px;width:127px;height:16px"></div>
<div class="c" style="left:277px;top:464px;width:100px;height:16px"></div>
<div class="c" style="left:377px;top:464px;width:67px;height:16px"></div>
<div class="c" style="left:444px;top:464px;width:67px;height:16px"></div>
<div class="c" style="left:511px;top:464px;width:67px;height:16px"></div>
<div class="c" style="left:578px;top:464px;width:77px;height:16px"></div>
<div class="c" style="left:655px;top:464px;width:67px;height:16px"></div>
<div class="c" style="left:722px;top:464px;width:71px;height:16px;background:#00ff00"></div>
<div class="fx" style="left:0px;top:480px;width:23px;height:16px"></div>
<div class="c" style="left:23px;top:480px;width:127px;height:16px"></div>
<div class="c" style="left:150px;top:480px;width:127px;height:16px"></div>
<div class="c" style="left:277px;top:480px;width:100px;height:16px"></div>
<div class="c" style="left:377px;top:480px;width:67px;height:16px"></div>
<div class="c" style="left:444px;top:480px;width:67px;height:16px"></div>
<div class="c" style="left:511px;top:480px;width:67px;height:16px"></div>
<div class="c" style="left:578px;top:480px;width:77px;height:16px"></div>
<div class="c" style="left:655px;top:480px;width:67px;height:16px"></div>
<div class="c" style="left:722px;top:480px;width:71px;height:16px;background:#00ff00"></div>
<div class="fx" style="left:0px;top:496px;width:23px;height:16px"></div>
<div class="c" style="left:23px;top:496px;width:127px;height:16px"></div>
<div class="c" style="left:150px;top:496px;width:127px;height:16px"></div>
<div class="c" style="left:277px;top:496px;width:100px;height:16px"></div>
<div class="c" style="left:377px;top:496px;width:67px;height:16px"></div>
<div class="c" style="left:444px;top:496px;width:67px;height:16px"></div>
<div class="c" style="left:511px;top:496px;width:67px;height:16px"></div>
<div class="c" style="left:578px;top:496px;width:77px;height:16px"></div>
<div class="c" style="left:655px;top:496px;width:67px;height:16px"></div>
<div class="c" style="left:722px;top:496px;width:71px;height:16px;background:#00ff00"></div>
<div class="fx" style="left:0px;top:512px;width:23px;height:16px"></div>
<div class="c" style="left:23px;top:512px;width:127px;height:16px"></div>
<div class="c" style="left:150px;top:512px;width:127px;height:16px"></div>
<div class="c" style="left:277px;top:512px;width:100px;height:16px"></div>
<div class="c" style="left:377px;top:512px;width:67px;height:16px"></div>
<div class="c" style="left:444px;top:512px;width:67px;height:16px"></div>
<div class="c" style="left:511px;top:512px;width:67px;height:16px"></div>
<div class="c" style="left:578px;top:512px;width:77px;height:16px"></div>
<div class="c" style="left:655px;top:512px;width:67px;height:16px"></div>
<div class="c" style="left:722px;top:512px;width:71px;height:16px;background:#00ff00"></div>
<div class="fx" style="left:0px;top:528px;width:23px;height:16px"></div>
<div class="c" style="left:23px;top:528px;width:127px;height:16px"></div>
<div class="c" style="left:150px;top:528px;width:127px;height:16px"></div>
<div class="c" style="left:277px;top:528px;width:100px;height:16px"></div>
<div class="c" style="left:377px;top:528px;width:67px;height:16px"></div>
<div class="c" style="left:444px;top:528px;width:67px;height:16px"></div>
<div class="c" style="left:511px;top:528px;width:67px;height:16px"></div>
<div class="c" style="left:578px;top:528px;width:77px;height:16px"></div>
<div class="c" style="left:655px;top:528px;width:67px;height:16px"></div>
<div class="c" style="left:722px;top:528px;width:71px;height:16px;background:#00ff00"></div>
<div class="fx" style="left:0px;top:544px;width:23px;height:16px"></div>
<div class="c" style="left:23px;top:544px;width:127px;height:16px"></div>
<div class="c" style="left:150px;top:544px;width:127px;height:16px"></div>
<div class="c" style="left:277px;top:544px;width:100px;height:16px"></div>
<div class="c" style="left:377px;top:544px;width:67px;height:16px"></div>
<div class="c" style="left:444px;top:544px;width:67px;height:16px"></div>
<div class="c" style="left:511px;top:544px;width:67px;height:16px"></div>
<div class="c" style="left:578px;top:544px;width:77px;height:16px"></div>
<div class="c" style="left:655px;top:544px;width:67px;height:16px"></div>
<div class="c" style="left:722px;top:544px;width:71px;height:16px;background:#00ff00"></div>
<div class="a" style="left:792px;top:0;width:1px;height:545px;background:#000"></div>
</div>
<div class="t r" style="left:-32px;top:167px;width:200px;">Datum/Uhrzeit</div>
<div class="t r" style="left:95px;top:167px;width:200px;">Regenbeginn</div>
<div class="t" style="left:300px;top:167px;">Blattnassdauer</div>
<div class="t" style="left:400px;top:167px;">Ø-Temp.</div>
<div class="t" style="left:467px;top:167px;">Ist-Temp.</div>
<div class="t" style="left:534px;top:167px;">Regen</div>
<div class="t" style="left:601px;top:167px;">Blattnässe</div>
<div class="t r" style="left:540px;top:167px;width:200px;">Beregnung</div>
<div class="t r" style="left:611px;top:167px;width:200px;">Infektion</div>
<div class="t r" style="left:-32px;top:183px;width:200px;transform:scaleX(0.9);">Sa, 03.05.2003 16:04</div>
<div class="t r" style="left:95px;top:183px;width:200px;">Fr, 02.05.2003 13:51</div>
<div class="t r" style="left:195px;top:183px;width:200px;">26h 13m</div>
<div class="t r" style="left:262px;top:183px;width:200px;">8,2 °C</div>
<div class="t r" style="left:329px;top:183px;width:200px;">15,4 °C</div>
<div class="t r" style="left:396px;top:183px;width:200px;">10,3 mm</div>
<div class="t r" style="left:473px;top:183px;width:200px;">0 %</div>
<div class="t r" style="left:540px;top:183px;width:200px;">Aus</div>
<div class="t r" style="left:611px;top:183px;width:200px;">mittel</div>
<div class="t r" style="left:-32px;top:199px;width:200px;transform:scaleX(0.9);">Sa, 03.05.2003 15:57</div>
<div class="t r" style="left:95px;top:199px;width:200px;">Fr, 02.05.2003 13:51</div>
<div class="t r" style="left:195px;top:199px;width:200px;">26h 06m</div>
<div class="t r" style="left:262px;top:199px;width:200px;">8,1 °C</div>
<div class="t r" style="left:329px;top:199px;width:200px;">15,5 °C</div>
<div class="t r" style="left:396px;top:199px;width:200px;">10,3 mm</div>
<div class="t r" style="left:473px;top:199px;width:200px;">0 %</div>
<div class="t r" style="left:540px;top:199px;width:200px;">Aus</div>
<div class="t r" style="left:611px;top:199px;width:200px;">mittel</div>
<div class="t r" style="left:-32px;top:215px;width:200px;transform:scaleX(0.9);">Sa, 03.05.2003 15:51</div>
<div class="t r" style="left:95px;top:215px;width:200px;">Fr, 02.05.2003 13:51</div>
<div class="t r" style="left:195px;top:215px;width:200px;">26h 00m</div>
<div class="t r" style="left:262px;top:215px;width:200px;">8,1 °C</div>
<div class="t r" style="left:329px;top:215px;width:200px;">15,4 °C</div>
<div class="t r" style="left:396px;top:215px;width:200px;">10,3 mm</div>
<div class="t r" style="left:473px;top:215px;width:200px;">0 %</div>
<div class="t r" style="left:540px;top:215px;width:200px;">Aus</div>
<div class="t r" style="left:611px;top:215px;width:200px;">mittel</div>
<div class="t r" style="left:-32px;top:231px;width:200px;transform:scaleX(0.9);">Sa, 03.05.2003 15:44</div>
<div class="t r" style="left:95px;top:231px;width:200px;">Fr, 02.05.2003 13:51</div>
<div class="t r" style="left:195px;top:231px;width:200px;">25h 53m</div>
<div class="t r" style="left:262px;top:231px;width:200px;">8,1 °C</div>
<div class="t r" style="left:329px;top:231px;width:200px;">15,4 °C</div>
<div class="t r" style="left:396px;top:231px;width:200px;">10,3 mm</div>
<div class="t r" style="left:473px;top:231px;width:200px;">0 %</div>
<div class="t r" style="left:540px;top:231px;width:200px;">Aus</div>
<div class="t r" style="left:611px;top:231px;width:200px;">mittel</div>
<div class="t r" style="left:-32px;top:247px;width:200px;transform:scaleX(0.9);">Sa, 03.05.2003 15:37</div>
<div class="t r" style="left:95px;top:247px;width:200px;">Fr, 02.05.2003 13:51</div>
<div class="t r" style="left:195px;top:247px;width:200px;">25h 46m</div>
<div class="t r" style="left:262px;top:247px;width:200px;">8,0 °C</div>
<div class="t r" style="left:329px;top:247px;width:200px;">15,3 °C</div>
<div class="t r" style="left:396px;top:247px;width:200px;">10,3 mm</div>
<div class="t r" style="left:473px;top:247px;width:200px;">0 %</div>
<div class="t r" style="left:540px;top:247px;width:200px;">Aus</div>
<div class="t r" style="left:611px;top:247px;width:200px;">mittel</div>
<div class="t r" style="left:-32px;top:263px;width:200px;transform:scaleX(0.9);">Sa, 03.05.2003 15:31</div>
<div class="t r" style="left:95px;top:263px;width:200px;">Fr, 02.05.2003 13:51</div>
<div class="t r" style="left:195px;top:263px;width:200px;">25h 40m</div>
<div class="t r" style="left:262px;top:263px;width:200px;">8,0 °C</div>
<div class="t r" style="left:329px;top:263px;width:200px;">15,3 °C</div>
<div class="t r" style="left:396px;top:263px;width:200px;">10,3 mm</div>
<div class="t r" style="left:473px;top:263px;width:200px;">0 %</div>
<div class="t r" style="left:540px;top:263px;width:200px;">Aus</div>
<div class="t r" style="left:611px;top:263px;width:200px;">mittel</div>
<div class="t r" style="left:-32px;top:279px;width:200px;transform:scaleX(0.9);">Sa, 03.05.2003 15:24</div>
<div class="t r" style="left:95px;top:279px;width:200px;">Fr, 02.05.2003 13:51</div>
<div class="t r" style="left:195px;top:279px;width:200px;">25h 33m</div>
<div class="t r" style="left:262px;top:279px;width:200px;">8,0 °C</div>
<div class="t r" style="left:329px;top:279px;width:200px;">15,4 °C</div>
<div class="t r" style="left:396px;top:279px;width:200px;">10,3 mm</div>
<div class="t r" style="left:473px;top:279px;width:200px;">0 %</div>
<div class="t r" style="left:540px;top:279px;width:200px;">Aus</div>
<div class="t r" style="left:611px;top:279px;width:200px;">mittel</div>
<div class="t r" style="left:-32px;top:295px;width:200px;transform:scaleX(0.9);">Sa, 03.05.2003 15:17</div>
<div class="t r" style="left:95px;top:295px;width:200px;">Fr, 02.05.2003 13:51</div>
<div class="t r" style="left:195px;top:295px;width:200px;">25h 26m</div>
<div class="t r" style="left:262px;top:295px;width:200px;">7,9 °C</div>
<div class="t r" style="left:329px;top:295px;width:200px;">15,4 °C</div>
<div class="t r" style="left:396px;top:295px;width:200px;">10,2 mm</div>
<div class="t r" style="left:473px;top:295px;width:200px;">0 %</div>
<div class="t r" style="left:540px;top:295px;width:200px;">Aus</div>
<div class="t r" style="left:611px;top:295px;width:200px;">mittel</div>
<div class="t r" style="left:-32px;top:311px;width:200px;transform:scaleX(0.9);">Sa, 03.05.2003 15:11</div>
<div class="t r" style="left:95px;top:311px;width:200px;">Fr, 02.05.2003 13:51</div>
<div class="t r" style="left:195px;top:311px;width:200px;">25h 20m</div>
<div class="t r" style="left:262px;top:311px;width:200px;">7,9 °C</div>
<div class="t r" style="left:329px;top:311px;width:200px;">15,4 °C</div>
<div class="t r" style="left:396px;top:311px;width:200px;">10,2 mm</div>
<div class="t r" style="left:473px;top:311px;width:200px;">0 %</div>
<div class="t r" style="left:540px;top:311px;width:200px;">Aus</div>
<div class="t r" style="left:611px;top:311px;width:200px;">mittel</div>
<div class="t r" style="left:-32px;top:327px;width:200px;transform:scaleX(0.9);">Sa, 03.05.2003 15:04</div>
<div class="t r" style="left:95px;top:327px;width:200px;">Fr, 02.05.2003 13:51</div>
<div class="t r" style="left:195px;top:327px;width:200px;">25h 13m</div>
<div class="t r" style="left:262px;top:327px;width:200px;">7,9 °C</div>
<div class="t r" style="left:329px;top:327px;width:200px;">15,4 °C</div>
<div class="t r" style="left:396px;top:327px;width:200px;">10,2 mm</div>
<div class="t r" style="left:473px;top:327px;width:200px;">0 %</div>
<div class="t r" style="left:540px;top:327px;width:200px;">Aus</div>
<div class="t r" style="left:611px;top:327px;width:200px;">mittel</div>
<div class="t r" style="left:-32px;top:343px;width:200px;transform:scaleX(0.9);">Sa, 03.05.2003 14:57</div>
<div class="t r" style="left:95px;top:343px;width:200px;">Fr, 02.05.2003 13:51</div>
<div class="t r" style="left:195px;top:343px;width:200px;">25h 06m</div>
<div class="t r" style="left:262px;top:343px;width:200px;">7,8 °C</div>
<div class="t r" style="left:329px;top:343px;width:200px;">15,3 °C</div>
<div class="t r" style="left:396px;top:343px;width:200px;">10,2 mm</div>
<div class="t r" style="left:473px;top:343px;width:200px;">0 %</div>
<div class="t r" style="left:540px;top:343px;width:200px;">Aus</div>
<div class="t r" style="left:611px;top:343px;width:200px;">mittel</div>
<div class="t r" style="left:-32px;top:359px;width:200px;transform:scaleX(0.9);">Sa, 03.05.2003 14:51</div>
<div class="t r" style="left:95px;top:359px;width:200px;">Fr, 02.05.2003 13:51</div>
<div class="t r" style="left:195px;top:359px;width:200px;">25h 00m</div>
<div class="t r" style="left:262px;top:359px;width:200px;">7,8 °C</div>
<div class="t r" style="left:329px;top:359px;width:200px;">15,4 °C</div>
<div class="t r" style="left:396px;top:359px;width:200px;">10,2 mm</div>
<div class="t r" style="left:473px;top:359px;width:200px;">0 %</div>
<div class="t r" style="left:540px;top:359px;width:200px;">Aus</div>
<div class="t r" style="left:611px;top:359px;width:200px;">mittel</div>
<div class="t r" style="left:-32px;top:375px;width:200px;transform:scaleX(0.9);">Sa, 03.05.2003 14:44</div>
<div class="t r" style="left:95px;top:375px;width:200px;">Fr, 02.05.2003 13:51</div>
<div class="t r" style="left:195px;top:375px;width:200px;">24h 53m</div>
<div class="t r" style="left:262px;top:375px;width:200px;">7,8 °C</div>
<div class="t r" style="left:329px;top:375px;width:200px;">15,4 °C</div>
<div class="t r" style="left:396px;top:375px;width:200px;">10,2 mm</div>
<div class="t r" style="left:473px;top:375px;width:200px;">0 %</div>
<div class="t r" style="left:540px;top:375px;width:200px;">Aus</div>
<div class="t r" style="left:611px;top:375px;width:200px;">mittel</div>
<div class="t r" style="left:-32px;top:391px;width:200px;transform:scaleX(0.9);">Sa, 03.05.2003 14:37</div>
<div class="t r" style="left:95px;top:391px;width:200px;">Fr, 02.05.2003 13:51</div>
<div class="t r" style="left:195px;top:391px;width:200px;">24h 46m</div>
<div class="t r" style="left:262px;top:391px;width:200px;">7,7 °C</div>
<div class="t r" style="left:329px;top:391px;width:200px;">15,4 °C</div>
<div class="t r" style="left:396px;top:391px;width:200px;">10,2 mm</div>
<div class="t r" style="left:473px;top:391px;width:200px;">0 %</div>
<div class="t r" style="left:540px;top:391px;width:200px;">Aus</div>
<div class="t r" style="left:611px;top:391px;width:200px;">mittel</div>
<div class="t r" style="left:-32px;top:407px;width:200px;transform:scaleX(0.9);">Sa, 03.05.2003 14:31</div>
<div class="t r" style="left:95px;top:407px;width:200px;">Fr, 02.05.2003 13:51</div>
<div class="t r" style="left:195px;top:407px;width:200px;">24h 40m</div>
<div class="t r" style="left:262px;top:407px;width:200px;">7,7 °C</div>
<div class="t r" style="left:329px;top:407px;width:200px;">15,4 °C</div>
<div class="t r" style="left:396px;top:407px;width:200px;">10,2 mm</div>
<div class="t r" style="left:473px;top:407px;width:200px;">0 %</div>
<div class="t r" style="left:540px;top:407px;width:200px;">Aus</div>
<div class="t r" style="left:611px;top:407px;width:200px;">mittel</div>
<div class="t r" style="left:-32px;top:423px;width:200px;transform:scaleX(0.9);">Sa, 03.05.2003 14:24</div>
<div class="t r" style="left:95px;top:423px;width:200px;">Fr, 02.05.2003 13:51</div>
<div class="t r" style="left:195px;top:423px;width:200px;">24h 33m</div>
<div class="t r" style="left:262px;top:423px;width:200px;">7,7 °C</div>
<div class="t r" style="left:329px;top:423px;width:200px;">15,4 °C</div>
<div class="t r" style="left:396px;top:423px;width:200px;">10,2 mm</div>
<div class="t r" style="left:473px;top:423px;width:200px;">0 %</div>
<div class="t r" style="left:540px;top:423px;width:200px;">Aus</div>
<div class="t r" style="left:611px;top:423px;width:200px;">mittel</div>
<div class="t r" style="left:-32px;top:439px;width:200px;transform:scaleX(0.9);">Sa, 03.05.2003 14:17</div>
<div class="t r" style="left:95px;top:439px;width:200px;">Fr, 02.05.2003 13:51</div>
<div class="t r" style="left:195px;top:439px;width:200px;">24h 26m</div>
<div class="t r" style="left:262px;top:439px;width:200px;">7,6 °C</div>
<div class="t r" style="left:329px;top:439px;width:200px;">15,3 °C</div>
<div class="t r" style="left:396px;top:439px;width:200px;">10,2 mm</div>
<div class="t r" style="left:473px;top:439px;width:200px;">0 %</div>
<div class="t r" style="left:540px;top:439px;width:200px;">Aus</div>
<div class="t r" style="left:611px;top:439px;width:200px;">leicht</div>
<div class="t r" style="left:-32px;top:455px;width:200px;transform:scaleX(0.9);">Sa, 03.05.2003 14:11</div>
<div class="t r" style="left:95px;top:455px;width:200px;">Fr, 02.05.2003 13:51</div>
<div class="t r" style="left:195px;top:455px;width:200px;">24h 20m</div>
<div class="t r" style="left:262px;top:455px;width:200px;">7,6 °C</div>
<div class="t r" style="left:329px;top:455px;width:200px;">15,4 °C</div>
<div class="t r" style="left:396px;top:455px;width:200px;">10,2 mm</div>
<div class="t r" style="left:473px;top:455px;width:200px;">0 %</div>
<div class="t r" style="left:540px;top:455px;width:200px;">Aus</div>
<div class="t r" style="left:611px;top:455px;width:200px;">leicht</div>
<div class="t r" style="left:-32px;top:471px;width:200px;transform:scaleX(0.9);">Sa, 03.05.2003 14:04</div>
<div class="t r" style="left:95px;top:471px;width:200px;">Fr, 02.05.2003 13:51</div>
<div class="t r" style="left:195px;top:471px;width:200px;">24h 13m</div>
<div class="t r" style="left:262px;top:471px;width:200px;">7,6 °C</div>
<div class="t r" style="left:329px;top:471px;width:200px;">15,5 °C</div>
<div class="t r" style="left:396px;top:471px;width:200px;">10,2 mm</div>
<div class="t r" style="left:473px;top:471px;width:200px;">0 %</div>
<div class="t r" style="left:540px;top:471px;width:200px;">Aus</div>
<div class="t r" style="left:611px;top:471px;width:200px;">leicht</div>
<div class="t r" style="left:-32px;top:487px;width:200px;transform:scaleX(0.9);">Sa, 03.05.2003 13:57</div>
<div class="t r" style="left:95px;top:487px;width:200px;">Fr, 02.05.2003 13:51</div>
<div class="t r" style="left:195px;top:487px;width:200px;">24h 06m</div>
<div class="t r" style="left:262px;top:487px;width:200px;">7,5 °C</div>
<div class="t r" style="left:329px;top:487px;width:200px;">15,4 °C</div>
<div class="t r" style="left:396px;top:487px;width:200px;">10,1 mm</div>
<div class="t r" style="left:473px;top:487px;width:200px;">0 %</div>
<div class="t r" style="left:540px;top:487px;width:200px;">Aus</div>
<div class="t r" style="left:611px;top:487px;width:200px;">leicht</div>
<div class="t r" style="left:-32px;top:503px;width:200px;transform:scaleX(0.9);">Sa, 03.05.2003 13:51</div>
<div class="t r" style="left:95px;top:503px;width:200px;">Fr, 02.05.2003 13:51</div>
<div class="t r" style="left:195px;top:503px;width:200px;">24h 00m</div>
<div class="t r" style="left:262px;top:503px;width:200px;">7,5 °C</div>
<div class="t r" style="left:329px;top:503px;width:200px;">15,4 °C</div>
<div class="t r" style="left:396px;top:503px;width:200px;">10,1 mm</div>
<div class="t r" style="left:473px;top:503px;width:200px;">0 %</div>
<div class="t r" style="left:540px;top:503px;width:200px;">Aus</div>
<div class="t r" style="left:611px;top:503px;width:200px;">leicht</div>
<div class="t r" style="left:-32px;top:519px;width:200px;transform:scaleX(0.9);">Sa, 03.05.2003 13:44</div>
<div class="t r" style="left:95px;top:519px;width:200px;">Fr, 02.05.2003 13:51</div>
<div class="t r" style="left:195px;top:519px;width:200px;">23h 53m</div>
<div class="t r" style="left:262px;top:519px;width:200px;">7,5 °C</div>
<div class="t r" style="left:329px;top:519px;width:200px;">15,4 °C</div>
<div class="t r" style="left:396px;top:519px;width:200px;">10,1 mm</div>
<div class="t r" style="left:473px;top:519px;width:200px;">0 %</div>
<div class="t r" style="left:540px;top:519px;width:200px;">Aus</div>
<div class="t r" style="left:611px;top:519px;width:200px;">leicht</div>
<div class="t r" style="left:-32px;top:535px;width:200px;transform:scaleX(0.9);">Sa, 03.05.2003 13:37</div>
<div class="t r" style="left:95px;top:535px;width:200px;">Fr, 02.05.2003 13:51</div>
<div class="t r" style="left:195px;top:535px;width:200px;">23h 46m</div>
<div class="t r" style="left:262px;top:535px;width:200px;">7,4 °C</div>
<div class="t r" style="left:329px;top:535px;width:200px;">15,4 °C</div>
<div class="t r" style="left:396px;top:535px;width:200px;">10,1 mm</div>
<div class="t r" style="left:473px;top:535px;width:200px;">0 %</div>
<div class="t r" style="left:540px;top:535px;width:200px;">Aus</div>
<div class="t r" style="left:611px;top:535px;width:200px;">leicht</div>
<div class="t r" style="left:-32px;top:551px;width:200px;transform:scaleX(0.9);">Sa, 03.05.2003 13:30</div>
<div class="t r" style="left:95px;top:551px;width:200px;">Fr, 02.05.2003 13:51</div>
<div class="t r" style="left:195px;top:551px;width:200px;">23h 39m</div>
<div class="t r" style="left:262px;top:551px;width:200px;">7,4 °C</div>
<div class="t r" style="left:329px;top:551px;width:200px;">15,4 °C</div>
<div class="t r" style="left:396px;top:551px;width:200px;">10,1 mm</div>
<div class="t r" style="left:473px;top:551px;width:200px;">0 %</div>
<div class="t r" style="left:540px;top:551px;width:200px;">Aus</div>
<div class="t r" style="left:611px;top:551px;width:200px;">leicht</div>
<div class="t r" style="left:-32px;top:567px;width:200px;transform:scaleX(0.9);">Sa, 03.05.2003 13:24</div>
<div class="t r" style="left:95px;top:567px;width:200px;">Fr, 02.05.2003 13:51</div>
<div class="t r" style="left:195px;top:567px;width:200px;">23h 33m</div>
<div class="t r" style="left:262px;top:567px;width:200px;">7,3 °C</div>
<div class="t r" style="left:329px;top:567px;width:200px;">15,4 °C</div>
<div class="t r" style="left:396px;top:567px;width:200px;">10,1 mm</div>
<div class="t r" style="left:473px;top:567px;width:200px;">0 %</div>
<div class="t r" style="left:540px;top:567px;width:200px;">Aus</div>
<div class="t r" style="left:611px;top:567px;width:200px;">leicht</div>
<div class="t r" style="left:-32px;top:583px;width:200px;transform:scaleX(0.9);">Sa, 03.05.2003 13:17</div>
<div class="t r" style="left:95px;top:583px;width:200px;">Fr, 02.05.2003 13:51</div>
<div class="t r" style="left:195px;top:583px;width:200px;">23h 26m</div>
<div class="t r" style="left:262px;top:583px;width:200px;">7,3 °C</div>
<div class="t r" style="left:329px;top:583px;width:200px;">15,5 °C</div>
<div class="t r" style="left:396px;top:583px;width:200px;">10,1 mm</div>
<div class="t r" style="left:473px;top:583px;width:200px;">0 %</div>
<div class="t r" style="left:540px;top:583px;width:200px;">Aus</div>
<div class="t r" style="left:611px;top:583px;width:200px;">leicht</div>
<div class="t r" style="left:-32px;top:599px;width:200px;transform:scaleX(0.9);">Sa, 03.05.2003 13:11</div>
<div class="t r" style="left:95px;top:599px;width:200px;">Fr, 02.05.2003 13:51</div>
<div class="t r" style="left:195px;top:599px;width:200px;">23h 20m</div>
<div class="t r" style="left:262px;top:599px;width:200px;">7,3 °C</div>
<div class="t r" style="left:329px;top:599px;width:200px;">15,4 °C</div>
<div class="t r" style="left:396px;top:599px;width:200px;">9,8 mm</div>
<div class="t r" style="left:473px;top:599px;width:200px;">0 %</div>
<div class="t r" style="left:540px;top:599px;width:200px;">Aus</div>
<div class="t r" style="left:611px;top:599px;width:200px;">leicht</div>
<div class="t r" style="left:-32px;top:615px;width:200px;transform:scaleX(0.9);">Sa, 03.05.2003 13:04</div>
<div class="t r" style="left:95px;top:615px;width:200px;">Fr, 02.05.2003 13:51</div>
<div class="t r" style="left:195px;top:615px;width:200px;">23h 13m</div>
<div class="t r" style="left:262px;top:615px;width:200px;">7,2 °C</div>
<div class="t r" style="left:329px;top:615px;width:200px;">15,5 °C</div>
<div class="t r" style="left:396px;top:615px;width:200px;">9,8 mm</div>
<div class="t r" style="left:473px;top:615px;width:200px;">0 %</div>
<div class="t r" style="left:540px;top:615px;width:200px;">Aus</div>
<div class="t r" style="left:611px;top:615px;width:200px;">leicht</div>
<div class="t r" style="left:-32px;top:631px;width:200px;transform:scaleX(0.9);">Sa, 03.05.2003 12:57</div>
<div class="t r" style="left:95px;top:631px;width:200px;">Fr, 02.05.2003 13:51</div>
<div class="t r" style="left:195px;top:631px;width:200px;">23h 06m</div>
<div class="t r" style="left:262px;top:631px;width:200px;">7,2 °C</div>
<div class="t r" style="left:329px;top:631px;width:200px;">15,4 °C</div>
<div class="t r" style="left:396px;top:631px;width:200px;">9,8 mm</div>
<div class="t r" style="left:473px;top:631px;width:200px;">0 %</div>
<div class="t r" style="left:540px;top:631px;width:200px;">Aus</div>
<div class="t r" style="left:611px;top:631px;width:200px;">leicht</div>
<div class="t r" style="left:-32px;top:647px;width:200px;transform:scaleX(0.9);">Sa, 03.05.2003 12:51</div>
<div class="t r" style="left:95px;top:647px;width:200px;">Fr, 02.05.2003 13:51</div>
<div class="t r" style="left:195px;top:647px;width:200px;">23h 00m</div>
<div class="t r" style="left:262px;top:647px;width:200px;">7,1 °C</div>
<div class="t r" style="left:329px;top:647px;width:200px;">15,4 °C</div>
<div class="t r" style="left:396px;top:647px;width:200px;">9,8 mm</div>
<div class="t r" style="left:473px;top:647px;width:200px;">0 %</div>
<div class="t r" style="left:540px;top:647px;width:200px;">Aus</div>
<div class="t r" style="left:611px;top:647px;width:200px;">leicht</div>
<div class="t r" style="left:-32px;top:663px;width:200px;transform:scaleX(0.9);">Sa, 03.05.2003 12:44</div>
<div class="t r" style="left:95px;top:663px;width:200px;">Fr, 02.05.2003 13:51</div>
<div class="t r" style="left:195px;top:663px;width:200px;">22h 53m</div>
<div class="t r" style="left:262px;top:663px;width:200px;">7,1 °C</div>
<div class="t r" style="left:329px;top:663px;width:200px;">15,3 °C</div>
<div class="t r" style="left:396px;top:663px;width:200px;">9,8 mm</div>
<div class="t r" style="left:473px;top:663px;width:200px;">0 %</div>
<div class="t r" style="left:540px;top:663px;width:200px;">Aus</div>
<div class="t r" style="left:611px;top:663px;width:200px;">leicht</div>
<div class="t r" style="left:-32px;top:679px;width:200px;transform:scaleX(0.9);">Sa, 03.05.2003 12:37</div>
<div class="t r" style="left:95px;top:679px;width:200px;">Fr, 02.05.2003 13:51</div>
<div class="t r" style="left:195px;top:679px;width:200px;">22h 46m</div>
<div class="t r" style="left:262px;top:679px;width:200px;">7,1 °C</div>
<div class="t r" style="left:329px;top:679px;width:200px;">15,3 °C</div>
<div class="t r" style="left:396px;top:679px;width:200px;">9,8 mm</div>
<div class="t r" style="left:473px;top:679px;width:200px;">0 %</div>
<div class="t r" style="left:540px;top:679px;width:200px;">Aus</div>
<div class="t r" style="left:611px;top:679px;width:200px;">leicht</div>
<div class="t r" style="left:-32px;top:695px;width:200px;transform:scaleX(0.9);">Sa, 03.05.2003 12:31</div>
<div class="t r" style="left:95px;top:695px;width:200px;">Fr, 02.05.2003 13:51</div>
<div class="t r" style="left:195px;top:695px;width:200px;">22h 40m</div>
<div class="t r" style="left:262px;top:695px;width:200px;">7,0 °C</div>
<div class="t r" style="left:329px;top:695px;width:200px;">15,2 °C</div>
<div class="t r" style="left:396px;top:695px;width:200px;">9,8 mm</div>
<div class="t r" style="left:473px;top:695px;width:200px;">0 %</div>
<div class="t r" style="left:540px;top:695px;width:200px;">Aus</div>
<div class="t r" style="left:611px;top:695px;width:200px;">leicht</div>
<div class="a" style="left:817px;top:165px;width:16px;height:545px;background-color:#fff;background-image:linear-gradient(45deg,#c0c0c0 25%,transparent 25%,transparent 75%,#c0c0c0 75%),linear-gradient(45deg,#c0c0c0 25%,transparent 25%,transparent 75%,#c0c0c0 75%);background-size:2px 2px;background-position:0 0,1px 1px"></div>
<div class="a raised" style="left:817px;top:165px;width:16px;height:16px"></div>
<div class="a" style="left:821px;top:171px;width:0;height:0;border-left:4px solid transparent;border-right:3px solid transparent;border-bottom:4px solid #000"></div>
<div class="a raised" style="left:817px;top:637px;width:16px;height:16px"></div>
<div class="a raised" style="left:817px;top:694px;width:16px;height:16px"></div>
<div class="arrd" style="left:821px;top:700px"></div>
<div class="a" style="left:0px;top:745px;width:930px;height:22px;border-left:1px solid #808080;border-top:1px solid #808080;border-right:1px solid #fff;border-bottom:1px solid #fff"></div>
<div class="a" style="left:932px;top:745px;width:51px;height:22px;border-left:1px solid #808080;border-top:1px solid #808080;border-right:1px solid #fff;border-bottom:1px solid #fff"></div>
<div class="a" style="left:985px;top:745px;width:37px;height:22px;border-left:1px solid #808080;border-top:1px solid #808080;border-right:1px solid #fff;border-bottom:1px solid #fff"></div>
<div class="t" style="left:936px;top:751px;transform:scaleX(0.905);">05.05.03</div>
<div class="t" style="left:993px;top:751px;">8:54</div>
</body></html>
